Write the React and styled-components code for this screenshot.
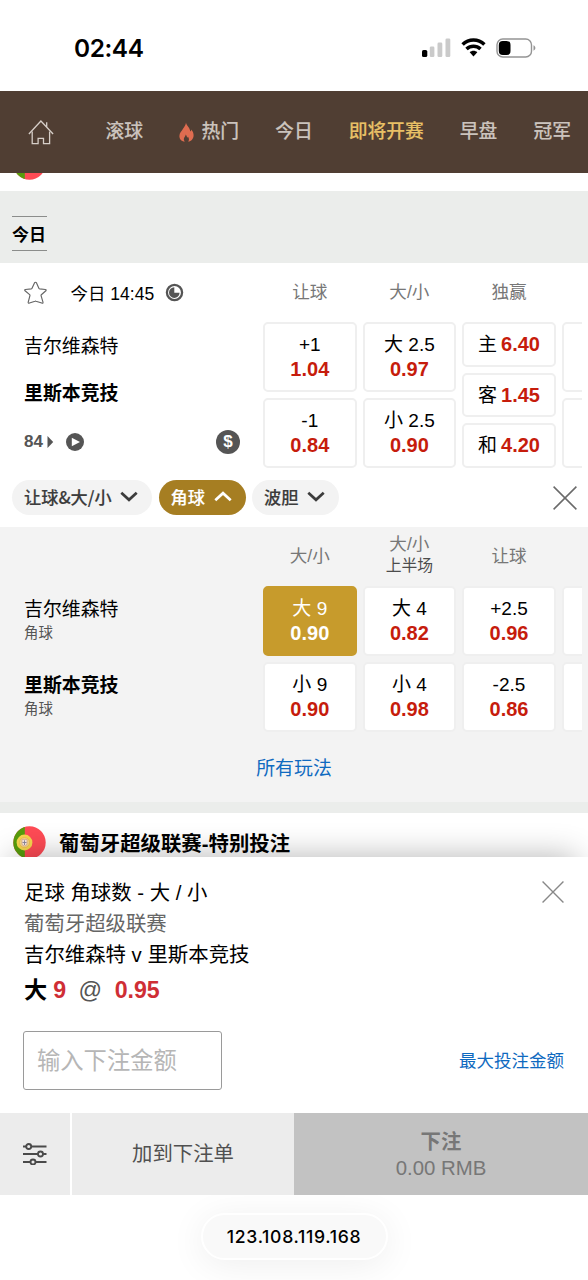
import React from "react";
import styled, { createGlobalStyle, css } from "styled-components";

const sans = `"Liberation Sans", "Noto Sans CJK SC", sans-serif`;
const system = `Inter, "Noto Sans CJK SC", sans-serif`;

const GlobalStyle = createGlobalStyle`
  *, *::before, *::after { box-sizing: border-box; }
  html, body { margin: 0; padding: 0; background: #fff; }
  body { font-family: ${sans}; color: #000; overflow: hidden; }
  button, input { font: inherit; color: inherit; margin: 0; padding: 0; border: 0; background: none; border-radius: 0; }
  svg { display: block; flex: none; }
`;

const Screen = styled.div`
  width: 588px;
  height: 1280px;
  display: flex;
  flex-direction: column;
  overflow: hidden;
  background: #fff;
`;

/* Status bar */
const StatusBar = styled.header`
  height: 91px;
  flex: none;
  display: flex;
  align-items: center;
  justify-content: space-between;
  padding: 4px 51px 0 74px;
`;
const Clock = styled.span`
  font: 600 24.4px/30px ${system};
  letter-spacing: -0.4px;
`;
const StatusIcons = styled.div`
  display: flex;
  align-items: center;
  gap: 10px;
`;

/* Navigation */
const Nav = styled.nav`
  height: 82px;
  flex: none;
  display: flex;
  align-items: center;
  padding-left: 28px;
  background: #503e33;
  color: #cbc3bd;
  overflow: hidden;
`;
const HomeLink = styled.a`
  width: 77.5px;
  flex: none;
`;
const Tabs = styled.div`
  display: flex;
  gap: 36px;
`;
const Tab = styled.a`
  display: flex;
  align-items: center;
  gap: 7.5px;
  font-size: 18.8px;
  line-height: 28px;
  font-weight: 500;
  -webkit-text-stroke: 0.1px currentColor;
  white-space: nowrap;
  color: ${(p) => (p.$active ? "#e8c066" : "inherit")};
`;

/* Feed */
const Feed = styled.main`
  height: 684px;
  flex: none;
  overflow: hidden;
  background: #ebedeb;
`;
const LeagueTail = styled.div`
  height: 18px;
  padding-left: 13px;
  background: #fff;
  display: flex;
  align-items: flex-end;
  overflow: hidden;
  padding-bottom: 11px;
`;
const DateBand = styled.div`
  height: 72px;
  display: flex;
  align-items: flex-end;
  padding: 0 12px 12px;
`;
const DateLabel = styled.span`
  width: 35px;
  height: 35px;
  border-top: 1px solid #8b8d8b;
  border-bottom: 1px solid #8b8d8b;
  font-size: 17px;
  line-height: 38px;
  font-weight: 700;
  white-space: nowrap;
`;
const Section = styled.section`
  padding-left: 24px;
  background: ${(p) => (p.$muted ? "#f3f3f3" : "#fff")};
`;
const SplitRow = styled.div`
  height: ${(p) => p.$height}px;
  display: flex;
`;
const Side = styled.div`
  width: 239px;
  flex: none;
  display: flex;
  flex-direction: ${(p) => (p.$column ? "column" : "row")};
  align-items: ${(p) => (p.$column ? "stretch" : "center")};
`;
const Board = styled.div`
  width: 319px;
  flex: none;
  overflow: hidden;
  display: flex;
  gap: 6px;
`;
const ColumnHead = styled.div`
  width: 93.6px;
  flex: none;
  display: flex;
  flex-direction: column;
  align-items: center;
  justify-content: center;
  font-size: 17.6px;
  line-height: 21px;
  padding-bottom: ${(p) => (p.$raised ? 3 : 0)}px;
  color: #777;
  small { font-size: 15.8px; color: #4c4c4c; }
`;
const OddsColumn = styled.div`
  width: 93.6px;
  flex: none;
  display: flex;
  flex-direction: column;
  gap: 6px;
`;
const OddsCell = styled.button`
  flex: 1;
  display: flex;
  flex-direction: ${(p) => (p.$inline ? "row" : "column")};
  align-items: center;
  justify-content: center;
  gap: ${(p) => (p.$inline ? 4 : 0)}px;
  border: 2px solid #efefef;
  border-radius: 5px;
  background: #fff;
  font-size: 19px;
  line-height: 24.5px;
  white-space: nowrap;
  ${(p) => p.$selected && css`
    background: #c79b2c;
    border-color: #c79b2c;
    color: #fff;
  `}
  ${(p) => p.$inline && css`span { padding-top: 2px; }`}
  b { font-size: 20px; color: ${(p) => (p.$selected ? "#fff" : "#c61c0c")}; }
`;
const FavButton = styled.button`
  width: 46.5px;
  display: flex;
`;
const KickOff = styled.span`
  font-size: 17.5px;
  margin-right: 11px;
`;
const Team = styled.div`
  height: ${(p) => p.$height}px;
  padding-top: 2px;
  line-height: ${(p) => p.$height}px;
  font-size: 18.9px;
  font-weight: ${(p) => (p.$favourite ? 700 : 400)};
`;
const MarketInfo = styled.div`
  height: 50px;
  display: flex;
  align-items: center;
  padding: 2px 23px 0 0;
  color: #555;
  font-size: 17px;
  font-weight: 700;
`;
const LiveIcons = styled.span`
  flex: 1;
  display: flex;
  align-items: center;
  gap: 12px;
  padding-left: 4px;
`;
const CornerTeam = styled.div`
  height: 76px;
  flex: none;
  padding-top: 11px;
  font-size: 18.9px;
  line-height: 25px;
  font-weight: ${(p) => (p.$favourite ? 700 : 400)};
  small {
    display: block;
    font-size: 14.4px;
    line-height: 22px;
    font-weight: 400;
    color: #555;
  }
`;
const PillBar = styled.div`
  height: 59px;
  margin-left: -12px;
  padding-right: 11px;
  display: flex;
  align-items: center;
  gap: 6.4px;
  > svg { margin-left: auto; }
`;
const Pill = styled.button`
  height: 35px;
  padding: 0 14px 2px 12px;
  display: flex;
  align-items: center;
  gap: 8.6px;
  border-radius: 18px;
  background: ${(p) => (p.$open ? "#a67e22" : "#f3f3f3")};
  color: ${(p) => (p.$open ? "#fff" : "#3c3c3c")};
  font: 500 17.2px/33px "Noto Sans CJK SC", sans-serif;
  -webkit-text-stroke: 0.15px currentColor;
  white-space: nowrap;
`;
const AllMarkets = styled.a`
  height: 70px;
  margin-left: -24px;
  padding-bottom: 2px;
  display: flex;
  align-items: center;
  justify-content: center;
  font-size: 18.9px;
  color: #0f6ac0;
`;
const LeagueHeader = styled.div`
  height: 58px;
  margin-top: 11px;
  padding-left: 13px;
  display: flex;
  align-items: center;
  gap: 13px;
  background: #fff;
  font-size: 20.4px;
  font-weight: 700;
`;

/* Bet slip */
const Slip = styled.section`
  position: relative;
  height: 256px;
  flex: none;
  padding: 21px 24px 0 24px;
  background: #fff;
  box-shadow: 0 -12px 30px -12px rgba(0, 0, 0, 0.3);
`;
const SlipTop = styled.div`
  display: flex;
  justify-content: space-between;
`;
const SlipLine = styled.div`
  font-size: 20.4px;
  line-height: 31px;
  color: ${(p) => (p.$muted ? "#666" : "#000")};
`;
const Selection = styled.div`
  display: flex;
  align-items: center;
  height: 37px;
  font-size: 23.2px;
  line-height: 30px;
  font-weight: 700;
  color: #000;
  b { color: #cf2e35; }
  span { color: #555; font-weight: 400; margin: 0 12.5px; }
  b:first-of-type { margin-left: 6px; }
`;
const CloseSlip = styled.button`
  height: 22px;
  margin-top: 3px;
`;
const StakeRow = styled.div`
  margin: 23px 0 0 -1px;
  display: flex;
  align-items: center;
  justify-content: space-between;
`;
const StakeInput = styled.input`
  width: 199px;
  height: 59px;
  padding: 2px 13px 0;
  border: 1px solid #9a9a9a;
  border-radius: 3px;
  font-family: ${sans};
  font-size: 23.3px;
  &::placeholder { color: #b6b6b6; opacity: 1; }
`;
const MaxStake = styled.a`
  padding-bottom: 3px;
  font-size: 17.5px;
  color: #0f6ac0;
`;
const Actions = styled.div`
  position: relative;
  height: 82px;
  flex: none;
  display: flex;
  gap: 2px;
  background: #fff;
`;
const Action = styled.button`
  width: ${(p) => p.$width}px;
  display: flex;
  flex-direction: column;
  align-items: center;
  justify-content: center;
  background: ${(p) => (p.$disabled ? "#c2c2c2" : "#ececec")};
  margin-left: ${(p) => (p.$disabled ? -2 : 0)}px;
  padding-top: ${(p) => (p.$disabled ? 2 : 0)}px;
  color: ${(p) => (p.$disabled ? "#777" : "#505050")};
  font-size: 20.4px;
  line-height: 26px;
`;

/* Browser chrome */
const BrowserBar = styled.footer`
  height: 85px;
  flex: none;
  display: flex;
  justify-content: center;
  padding-top: 18px;
`;
const Address = styled.div`
  width: 187px;
  height: 47px;
  border: 2px solid #fff;
  border-radius: 24px;
  background: #f9f9f9;
  box-shadow: 0 5px 36px rgba(0, 0, 0, 0.07);
  font: 500 17.6px/43px ${system};
  letter-spacing: 0.68px;
  text-align: center;
`;

/* Icons */
const Signal = () => (
  <svg width="29" height="19" viewBox="0 0 29 19">
    <rect x="0" y="12" width="5.3" height="7" rx="1.6" fill="#000" />
    <rect x="7.8" y="8.4" width="4.6" height="10.6" rx="1.3" fill="#cacaca" />
    <rect x="15.5" y="4.6" width="4.8" height="14.4" rx="1.3" fill="#cacaca" />
    <rect x="23.5" y="0.4" width="4.8" height="18.6" rx="1.3" fill="#cacaca" />
  </svg>
);
const Wifi = () => (
  <svg width="25" height="19" viewBox="0 0 25 19">
    <g fill="none" stroke="#000" strokeWidth="3.5">
      <path d="M1.600 6.500C7.800.500 17.200.500 23.400 6.500" />
      <path d="M5.500 11c4.100-3.800 9.900-3.800 14 0" />
    </g>
    <path d="M8.700 14.200c2.100-2 5.500-2 7.600 0L12.500 18.500z" fill="#000" />
  </svg>
);
const Battery = () => (
  <svg width="41" height="20" viewBox="0 0 41 20">
    <rect x="1" y="1" width="34.500" height="18" rx="5.800" fill="none" stroke="#949494" strokeWidth="1.400" />
    <rect x="2.800" y="2.900" width="11.700" height="14.200" rx="4" fill="#000" />
    <path d="M37.500 7.300c2.500 1.300 2.500 4.100 0 5.400z" fill="#949494" />
  </svg>
);
const Home = () => (
  <svg width="26" height="26" viewBox="0 0 26 26" fill="none" stroke="#d6cec8" strokeWidth="1.300">
    <path d="M.900 15 12.900 2l12.200 13M18.700 7.800V3.200" />
    <path d="M4.200 12.400v12.200h5.900v-5.300h5.400v5.300h6.100V12.400" />
  </svg>
);
const Flame = () => (
  <svg width="15" height="20" viewBox="0 0 15 20">
    <path d="M7 .4c.4 3.200 4.100 5.100 4.300 9.100.700-.500 1-1.300 1.100-2.100 1.300 1.800 2.300 3.800 2.200 6-.1 3.300-2.300 5.700-5.500 6.200 1.300-1.600 1-3.400-.1-4.900l-.9 1c-.2-1.500-.6-2.400-1.500-3.200.3 1.700-1.900 2.800-1.800 4.800 0 .9.400 1.700 1.100 2.300C2 18.900.4 16.900.4 13.900.4 10.600 2.800 9 4 6.700 5.400 4.500 6.800 2.900 7 .4z" fill="#df6c50" />
  </svg>
);
const Flag = ({ id }) => (
  <svg width="33" height="33" viewBox="0 0 33 33">
    <defs>
      <clipPath id={id}><circle cx="16.500" cy="16.500" r="16.200" /></clipPath>
    </defs>
    <g clipPath={`url(#${id})`}>
      <rect width="33" height="33" fill="#ff4b55" />
      <rect width="11.800" height="33" fill="#579d0c" />
    </g>
    <circle cx="11.500" cy="16.500" r="7.900" fill="#f8d84e" />
    <circle cx="11.500" cy="16.500" r="5" fill="#f8d98a" stroke="#efb84c" strokeWidth=".8" />
    <path d="M9 13.400h5v4a2.500 2.500 0 0 1-5 0z" fill="#f9ebe0" stroke="#d39a80" strokeWidth=".6" />
    <path d="M11.500 14.300v4.700M9.500 16.500h4" stroke="#8a8296" strokeWidth=".9" />
  </svg>
);
const Star = () => (
  <svg width="23" height="24" viewBox="0 0 24 24">
    <path d="M10.900 1.500q1.100-1.500 2.200 0l2.400 5.600q.2.500.8.600l6 .6q1.400.3.500 1.400l-4.700 4.100q-.4.400-.3.900l2 6.900q.2 1.600-1.300.9l-6-1.900q-.500-.2-1 0l-5.800 1.900q-1.600.6-1.300-.9l1.800-6.900q.1-.6-.3-1L1.100 9.700q-1-1.100.4-1.400l6.100-.6q.6-.1.800-.6z" fill="none" stroke="#666" strokeWidth="1.200" />
  </svg>
);
const Timer = () => (
  <svg width="19" height="19" viewBox="0 0 19 19">
    <circle cx="9.500" cy="9.500" r="7.600" fill="none" stroke="#555" strokeWidth="2.300" />
    <path d="M9.300 4.300v5.500h5.300a5.300 5.300 0 1 1-5.300-5.500z" fill="#555" />
  </svg>
);
const Caret = () => (
  <svg width="7" height="12" viewBox="0 0 7 12"><path d="M.5 0v12L6.200 6z" fill="#555" /></svg>
);
const Play = () => (
  <svg width="18" height="18" viewBox="0 0 18 18">
    <circle cx="9" cy="9" r="9" fill="#555" />
    <path d="M5.800 4.800v8.400L14 9z" fill="#fff" />
  </svg>
);
const CashDisc = styled.span`
  width: 24px;
  height: 24px;
  border-radius: 50%;
  background: #555;
  color: #fff;
  font-size: 17px;
  line-height: 24px;
  text-align: center;
`;
const Chevron = ({ up }) => (
  <svg width="18" height="11" viewBox="0 0 18 11">
    <path d={up ? "M1.300 9.300 9 2.200l7.700 7.100" : "M1.300 1.700 9 8.800l7.700-7.100"} fill="none" stroke="currentColor" strokeWidth="2.700" />
  </svg>
);
const Cross = ({ size, color }) => (
  <svg width={size} height={size} viewBox="0 0 24 24">
    <path d="M.6.6l22.800 22.800M23.400.6.6 23.400" stroke={color} strokeWidth="1.500" />
  </svg>
);
const Sliders = () => (
  <svg width="24" height="22" viewBox="0 0 24 22" fill="none" stroke="#4a4a4a" strokeWidth="1.900">
    <path d="M0 3.500h3.200M8.200 3.500H23.500M0 11h15M20 11h3.500M0 19h7.500M12.500 19h11" />
    <circle cx="5.700" cy="3.500" r="2.500" />
    <circle cx="17.500" cy="11" r="2.500" />
    <circle cx="10" cy="19" r="2.500" />
  </svg>
);

const tabs = ["滚球", "热门", "今日", "即将开赛", "早盘", "冠军"];
const mainColumns = [
  [["+1", "1.04"], ["-1", "0.84"]],
  [["大 2.5", "0.97"], ["小 2.5", "0.90"]],
  [["主", "6.40"], ["客", "1.45"], ["和", "4.20"]],
  [["", ""], ["", ""]],
];
const cornerColumns = [
  [["大 9", "0.90", true], ["小 9", "0.90"]],
  [["大 4", "0.82"], ["小 4", "0.98"]],
  [["+2.5", "0.96"], ["-2.5", "0.86"]],
  [["", ""], ["", ""]],
];

const OddsBoard = ({ columns }) => (
  <Board>
    {columns.map((cells, i) => (
      <OddsColumn key={i}>
        {cells.map(([label, price, selected], j) => (
          <OddsCell key={j} $inline={cells.length === 3} $selected={selected}>
            {label && <span>{label}</span>}
            {price && <b>{price}</b>}
          </OddsCell>
        ))}
      </OddsColumn>
    ))}
  </Board>
);

export default function App() {
  return (
    <Screen>
      <GlobalStyle />
      <StatusBar>
        <Clock>02:44</Clock>
        <StatusIcons><Signal /><Wifi /><Battery /></StatusIcons>
      </StatusBar>
      <Nav>
        <HomeLink><Home /></HomeLink>
        <Tabs>
          {tabs.map((t) => (
            <Tab key={t} $active={t === "即将开赛"}>{t === "热门" && <Flame />}{t}</Tab>
          ))}
        </Tabs>
      </Nav>
      <Feed>
        <LeagueTail><Flag id="flag-a" /></LeagueTail>
        <DateBand><DateLabel>今日</DateLabel></DateBand>
        <Section>
          <SplitRow $height={59}>
            <Side>
              <FavButton><Star /></FavButton>
              <KickOff>今日 14:45</KickOff>
              <Timer />
            </Side>
            <Board>
              <ColumnHead>让球</ColumnHead>
              <ColumnHead>大/小</ColumnHead>
              <ColumnHead>独赢</ColumnHead>
            </Board>
          </SplitRow>
          <SplitRow $height={146}>
            <Side $column>
              <Team $height={46}>吉尔维森特</Team>
              <Team $height={48} $favourite>里斯本竞技</Team>
              <MarketInfo>
                84
                <LiveIcons><Caret /><Play /></LiveIcons>
                <CashDisc>$</CashDisc>
              </MarketInfo>
            </Side>
            <OddsBoard columns={mainColumns} />
          </SplitRow>
          <PillBar>
            <Pill>让球&amp;大/小<Chevron /></Pill>
            <Pill $open>角球<Chevron up /></Pill>
            <Pill>波胆<Chevron /></Pill>
            <Cross size={24} color="#6a6a6a" />
          </PillBar>
        </Section>
        <Section $muted>
          <SplitRow $height={59}>
            <Side />
            <Board>
              <ColumnHead>大/小</ColumnHead>
              <ColumnHead $raised>大/小<small>上半场</small></ColumnHead>
              <ColumnHead>让球</ColumnHead>
            </Board>
          </SplitRow>
          <SplitRow $height={146}>
            <Side $column>
              <CornerTeam>吉尔维森特<small>角球</small></CornerTeam>
              <CornerTeam $favourite>里斯本竞技<small>角球</small></CornerTeam>
            </Side>
            <OddsBoard columns={cornerColumns} />
          </SplitRow>
          <AllMarkets>所有玩法</AllMarkets>
        </Section>
        <LeagueHeader><Flag id="flag-b" />葡萄牙超级联赛-特别投注</LeagueHeader>
      </Feed>
      <Slip>
        <SlipTop>
          <div>
            <SlipLine>足球 角球数 - 大 / 小</SlipLine>
            <SlipLine $muted>葡萄牙超级联赛</SlipLine>
            <SlipLine>吉尔维森特 v 里斯本竞技</SlipLine>
          </div>
          <CloseSlip><Cross size={22} color="#888" /></CloseSlip>
        </SlipTop>
        <Selection>大<b>9</b><span>@</span><b>0.95</b></Selection>
        <StakeRow>
          <StakeInput placeholder="输入下注金额" />
          <MaxStake>最大投注金额</MaxStake>
        </StakeRow>
      </Slip>
      <Actions>
        <Action $width={70}><Sliders /></Action>
        <Action $width={222}>加到下注单</Action>
        <Action $width={294} $disabled><b>下注</b><span>0.00 RMB</span></Action>
      </Actions>
      <BrowserBar><Address>123.108.119.168</Address></BrowserBar>
    </Screen>
  );
}
